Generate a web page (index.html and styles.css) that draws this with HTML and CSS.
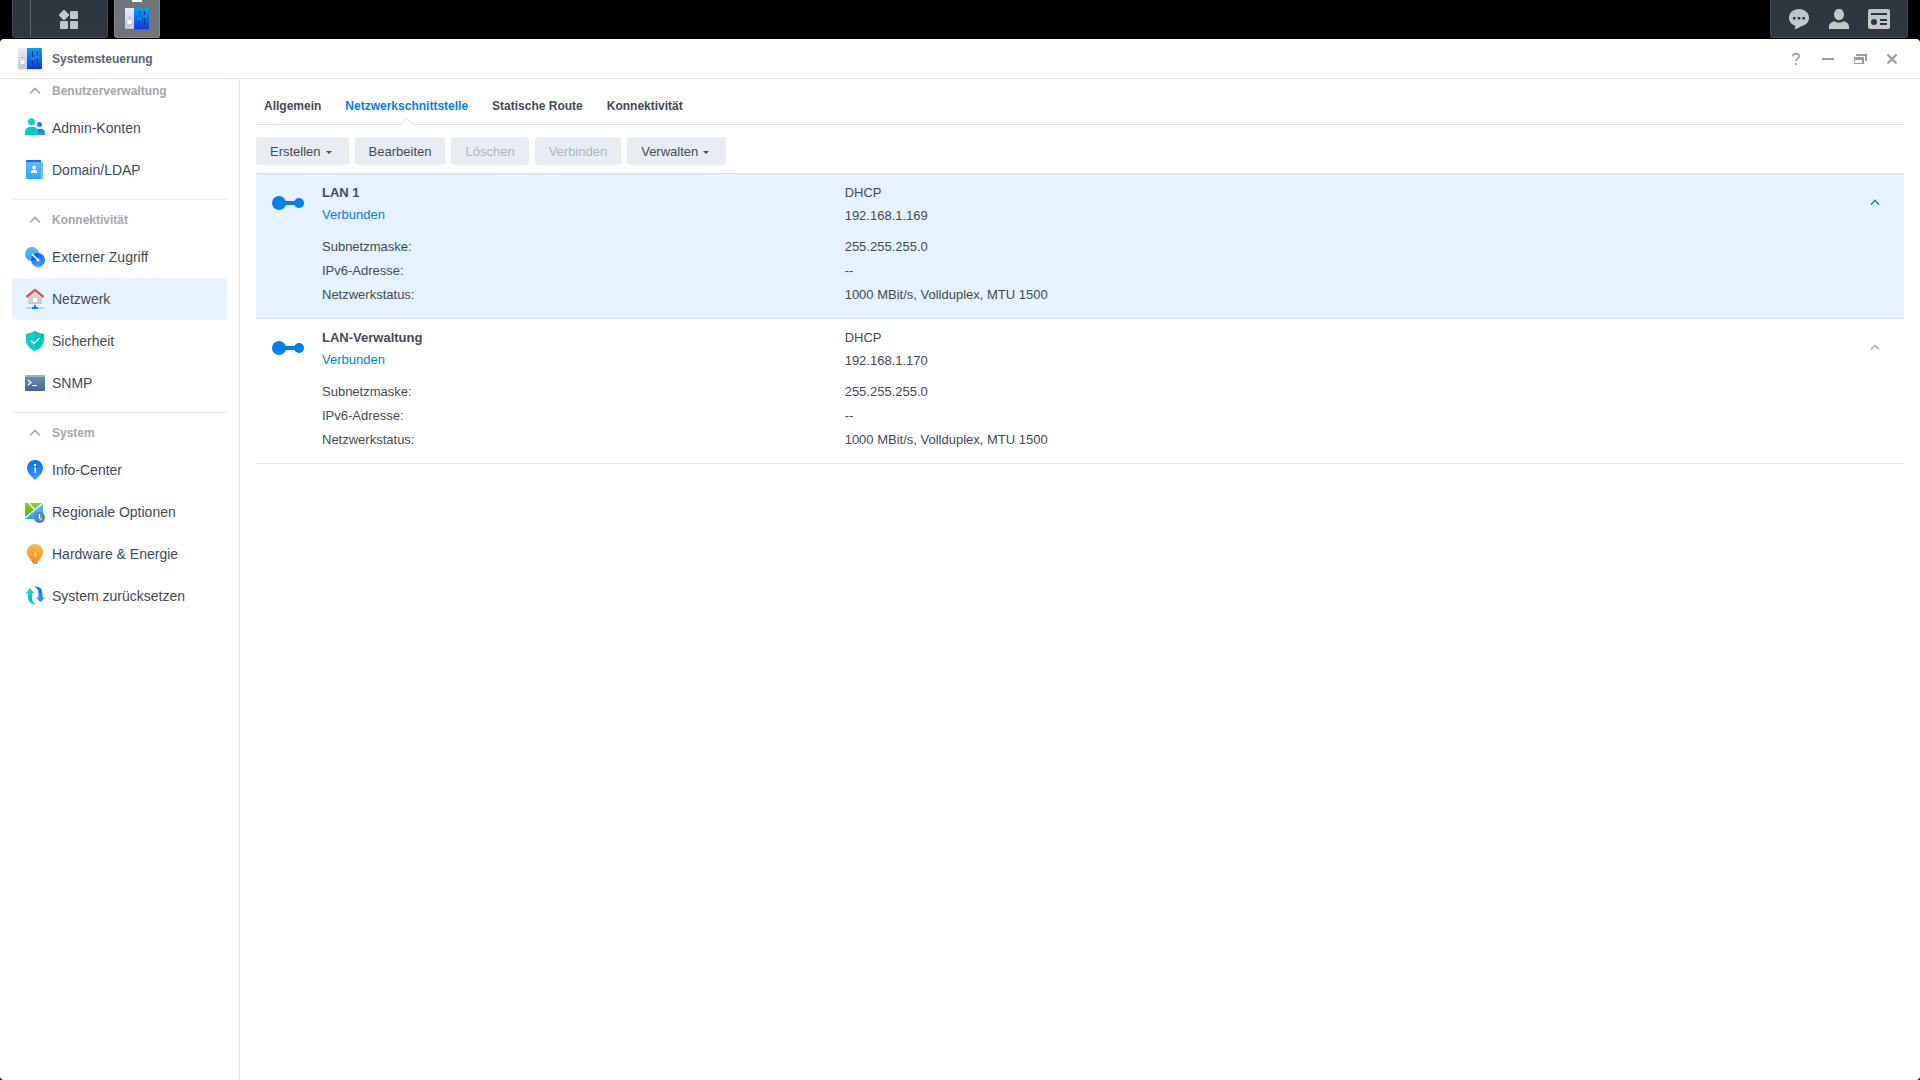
FILE: index.html
```html
<!DOCTYPE html>
<html lang="de">
<head>
<meta charset="utf-8">
<title>Systemsteuerung</title>
<link rel="stylesheet" href="styles.css">
</head>
<body>
<svg class="defs" width="0" height="0" aria-hidden="true">
  <defs>
    <linearGradient id="g-silver" x1="0" y1="0" x2="0" y2="1"><stop offset="0" stop-color="#e9ebfa"/><stop offset="1" stop-color="#c3c8de"/></linearGradient>
    <linearGradient id="g-panel" x1="0" y1="0" x2="0" y2="1"><stop offset="0" stop-color="#08a0ee"/><stop offset="1" stop-color="#1638dc"/></linearGradient>
    <linearGradient id="g-gray" x1="0" y1="0" x2="0" y2="1"><stop offset="0" stop-color="#b9c3cd"/><stop offset="1" stop-color="#c8cbce"/></linearGradient>
    <linearGradient id="g-blue" x1="0" y1="0" x2="0" y2="1"><stop offset="0" stop-color="#0073f7"/><stop offset="1" stop-color="#4a94ff"/></linearGradient>
    <linearGradient id="g-sky" x1="0" y1="0" x2="0" y2="1"><stop offset="0" stop-color="#58b9ff"/><stop offset="1" stop-color="#2fa6fb"/></linearGradient>
    <linearGradient id="g-teal" x1="0" y1="0" x2="0" y2="1"><stop offset="0" stop-color="#2bd4cb"/><stop offset="1" stop-color="#00c2cc"/></linearGradient>
    <linearGradient id="g-steel" x1="0" y1="0" x2="0" y2="1"><stop offset="0" stop-color="#7594b3"/><stop offset="1" stop-color="#426490"/></linearGradient>
    <linearGradient id="g-orange" x1="0" y1="0" x2="0" y2="1"><stop offset="0" stop-color="#fbbd52"/><stop offset="1" stop-color="#f88f1e"/></linearGradient>
    <linearGradient id="g-green" x1="0" y1="0" x2="0" y2="1"><stop offset="0" stop-color="#8fce1c"/><stop offset="1" stop-color="#4fb80c"/></linearGradient>
    <linearGradient id="g-house" x1="0" y1="0" x2="0" y2="1"><stop offset="0" stop-color="#dcdfe2"/><stop offset="1" stop-color="#c6cacd"/></linearGradient>
    <symbol id="i-control" viewBox="0 0 24 24">
      <path d="M1 21h22v1.500H1z" fill="#000" opacity=".18"/>
      <path d="M1 1h8v21H1q-1 0-1-1V2q0-1 1-1z" fill="url(#g-silver)"/>
      <path d="M9 1h14q1 0 1 1v19q0 1-1 1H9z" fill="url(#g-panel)"/>
      <circle cx="4.500" cy="15.500" r="3" fill="#aab0c8"/><circle cx="4.500" cy="15" r="2.500" fill="#f6f7ff"/>
      <circle cx="4.500" cy="10.500" r=".6" fill="#596080"/>
      <path d="M14.500 4v14M19.500 4v14" stroke="#0b3382" stroke-width="1"/>
      <circle cx="14.500" cy="11.500" r="1.600" fill="#1a8cf7"/><circle cx="19.500" cy="9.500" r="1.600" fill="#1a8cf7"/>
    </symbol>
    <symbol id="i-up" viewBox="0 0 12 8"><path d="M1 6.500l5-5 5 5" fill="none" stroke="currentColor" stroke-width="1.700"/></symbol>
    <symbol id="i-link" viewBox="0 0 32 14"><circle cx="7" cy="7" r="7" fill="currentColor"/><circle cx="27" cy="7" r="5" fill="currentColor"/><path d="M7 5h20v4H7z" fill="currentColor"/></symbol>
  </defs>
</svg>

<header class="taskbar">
  <div class="dock">
    <span class="dock-edge"></span>
    <button class="task-btn menu-btn" type="button" aria-label="Hauptmenü">
      <svg width="20" height="20" viewBox="0 0 20 20" fill="url(#g-gray)"><path d="M4.200 .2q.8-.8 1.600 0l4 4q.8.8 0 1.600l-4 4q-.8.8-1.600 0l-4-4q-.8-.8 0-1.600z"/><rect x="11" y="1" width="8" height="8" rx="1"/><rect x="1" y="11" width="8" height="8" rx="1"/><rect x="11" y="11" width="8" height="8" rx="1"/></svg>
    </button>
  </div>
  <button class="task-btn app-btn" type="button" aria-label="Systemsteuerung">
    <svg width="24" height="24"><use href="#i-control"/></svg>
  </button>
  <div class="tray">
    <button class="task-btn" type="button" aria-label="Benachrichtigungen">
      <svg width="20" height="20" viewBox="0 0 20 20"><path d="M10 0c5.700 0 10 3.800 10 8.800 0 4.700-3.800 8-8.500 8.600C10 18.800 8 19.800 5 20c1-1 1.400-2 1.300-3.200C2.500 15.500 0 12.600 0 8.800 0 3.800 4.300 0 10 0z" fill="url(#g-gray)"/><path d="M4 8h2.500v2.500H4zM8.800 8h2.500v2.500H8.800zM13.500 8H16v2.500h-2.500z" fill="#2d343e"/></svg>
    </button>
    <button class="task-btn" type="button" aria-label="Benutzer">
      <svg width="20" height="20" viewBox="0 0 20 20" fill="url(#g-gray)"><ellipse cx="10" cy="5.500" rx="5" ry="5.700"/><path d="M0 20v-2.500C0 14.500 2.500 13 5.500 12.200 8 14 12 14 14.500 12.200 17.500 13 20 14.500 20 17.500V20z"/></svg>
    </button>
    <button class="task-btn" type="button" aria-label="Widgets">
      <svg width="22" height="20" viewBox="0 0 22 20"><rect width="22" height="20" rx="2" fill="url(#g-gray)"/><path d="M3 4h16v2H3zM12 10h7v2h-7zM12 14h7v2h-7z" fill="#2d343e"/><circle cx="6" cy="13" r="3" fill="#2d343e"/></svg>
    </button>
  </div>
</header>

<div class="window">
  <div class="titlebar">
    <svg width="24" height="24" aria-hidden="true"><use href="#i-control"/></svg>
    <h1>Systemsteuerung</h1>
    <div class="window-tools">
      <button type="button" aria-label="Hilfe"><svg width="12" height="12" viewBox="0 0 12 12" fill="none" stroke="currentColor" stroke-width="1.700"><path d="M2.800 3.500C2.800-.3 9.200-.3 9.200 3.300 9.200 5.700 6 5.500 6 8.500M6 10v2"/></svg></button>
      <button type="button" aria-label="Minimieren"><svg width="12" height="12" viewBox="0 0 12 12"><path d="M0 5h12v2H0z" fill="currentColor"/></svg></button>
      <button type="button" aria-label="Wiederherstellen"><svg width="14" height="12" viewBox="0 0 14 12"><path d="M3 1h11v7h-2V3H3zM1 4h10v7H1zM2 7v3h7V7z" fill="currentColor" fill-rule="evenodd"/></svg></button>
      <button type="button" aria-label="Schließen"><svg width="12" height="12" viewBox="0 0 12 12"><path d="M1.500 1.500l9 9M10.500 1.500l-9 9" stroke="currentColor" stroke-width="2.200"/></svg></button>
    </div>
  </div>

  <div class="body">
    <nav class="sidebar" aria-label="Einstellungen">
      <section class="group">
        <h2><svg width="12" height="8"><use href="#i-up"/></svg>Benutzerverwaltung</h2>
        <a class="item" href="#admin"><svg width="24" height="24" viewBox="0 0 24 24"><circle cx="16.500" cy="8.500" r="2.500" fill="#2680ff"/><path d="M13 19v-3c0-2 1-3 3-3h2c3 0 4 2 4 5v1z" fill="url(#g-blue)"/><circle cx="8.500" cy="5.500" r="3.500" fill="url(#g-teal)"/><path d="M2 19v-2c0-4 2-6 5-6h3c4 0 5 2 5 6v2z" fill="#08ccc3"/></svg>Admin-Konten</a>
        <a class="item" href="#ldap"><svg width="24" height="24" viewBox="0 0 24 24"><rect x="5" y="4" width="15" height="17" rx="1" fill="#78c5ff"/><path d="M4 2h14v4H3V3q0-1 1-1z" fill="#0075f5"/><rect x="3" y="4" width="15" height="17" rx="1" fill="url(#g-sky)"/><circle cx="11" cy="9.500" r="2" fill="#fff"/><path d="M8 15v-1q0-2 2-2h2q2 0 2 2v1z" fill="#fff"/></svg>Domain/LDAP</a>
      </section>
      <section class="group">
        <h2><svg width="12" height="8"><use href="#i-up"/></svg>Konnektivität</h2>
        <a class="item" href="#extern"><svg width="24" height="24" viewBox="0 0 24 24"><circle cx="9" cy="9" r="7" fill="url(#g-sky)"/><circle cx="15" cy="15" r="7" fill="url(#g-blue)"/><path d="M8.100 15.940A7 7 0 0 1 15.940 8.100 7 7 0 0 1 8.100 15.940z" fill="#0063ee"/><path d="M9 9l6 6" stroke="#fff" stroke-width="1.500"/><circle cx="15" cy="15" r="1.600" fill="#fff"/></svg>Externer Zugriff</a>
        <a class="item current" href="#netzwerk" aria-current="page"><svg width="24" height="24" viewBox="0 0 24 24"><path d="M12 3l7 6v8H5V9z" fill="url(#g-house)"/><path d="M3.500 9.800L12 2.800l8.500 7" fill="none" stroke="#dc4c46" stroke-width="2.200"/><path d="M10 11h4v4h-4z" fill="#fff"/><path d="M3 20h18v2H3z" fill="#c9cfd6"/><path d="M11 18h2v2h2v2H9v-2h2z" fill="#087cff"/></svg>Netzwerk</a>
        <a class="item" href="#sicherheit"><svg width="24" height="24" viewBox="0 0 24 24"><path d="M12 2q4 2.500 9 3v6q0 7-9 11-9-4-9-11V5q5-.5 9-3z" fill="#00c4c4"/><path d="M12 2v20q-9-4-9-11V5q5-.5 9-3z" fill="#0bcfc8"/><path d="M8 11.500l3 3 5.500-5.500" fill="none" stroke="#fff" stroke-width="1.500"/></svg>Sicherheit</a>
        <a class="item" href="#snmp"><svg width="24" height="24" viewBox="0 0 24 24"><rect x="2" y="4" width="20" height="16" rx="1" fill="url(#g-steel)"/><path d="M2 4h20v2H2z" fill="#9bb4cc"/><path d="M5 9l3 2.500L5 14M9 14.500h5" fill="none" stroke="#fff" stroke-width="1.200"/></svg>SNMP</a>
      </section>
      <section class="group">
        <h2><svg width="12" height="8"><use href="#i-up"/></svg>System</h2>
        <a class="item" href="#info"><svg width="24" height="24" viewBox="0 0 24 24"><path d="M12 2a8 8 0 0 1 8 8q0 5-5 9l-3 3-3-3q-5-4-5-9a8 8 0 0 1 8-8z" fill="url(#g-blue)"/><path d="M11 6h2v2h-2zM11 9.500h2V15h-1.500v-4.500H11z" fill="#fff"/></svg>Info-Center</a>
        <a class="item" href="#region"><svg width="24" height="24" viewBox="0 0 24 24"><path d="M2 3h18v16H2z" fill="url(#g-sky)"/><path d="M2 3h17L2 17z" fill="url(#g-green)"/><path d="M20 3L2 18M6 3l5 6" fill="none" stroke="#fff" stroke-width="1.400"/><circle cx="16.500" cy="17.500" r="5.500" fill="#5b83b0"/><path d="M16.500 14v4l2 1.500" fill="none" stroke="#fff" stroke-width="1.300"/></svg>Regionale Optionen</a>
        <a class="item" href="#hardware"><svg width="24" height="24" viewBox="0 0 24 24"><path d="M9 18h6v2l-1 2h-4l-1-2z" fill="#9aa3ab"/><path d="M12 2a8 8 0 0 1 8 8q0 3-2 5.500-2 1.500-2 3.500H8q0-2-2-3.500-2-2.500-2-5.500a8 8 0 0 1 8-8z" fill="url(#g-orange)"/><path d="M11 11.500h1.500V15" fill="none" stroke="#fff" stroke-width="1.300"/></svg>Hardware &amp; Energie</a>
        <a class="item" href="#reset"><svg width="24" height="24" viewBox="0 0 24 24"><path d="M7 4l4.500 5.500H9V14q0 4.500 4 6-8 .500-8-7V9.500H2.500z" fill="url(#g-teal)"/><path d="M17.500 18.500L13 13.500h2.500V9q0-4.500-4.500-6.500 8.500-.5 8.500 7v4h2.500z" fill="url(#g-blue)"/></svg>System zurücksetzen</a>
      </section>
    </nav>

    <main class="content">
      <nav class="tabs" aria-label="Netzwerk">
        <a href="#allgemein">Allgemein</a>
        <a class="active" href="#schnittstelle" aria-current="page">Netzwerkschnittstelle<svg class="pointer" width="14" height="7" viewBox="0 0 14 7" aria-hidden="true"><path d="M1 7V6.500L7 .5l6 6V7z" fill="#fff"/><path d="M0 6.500h1L7 .7l6 5.800h1" fill="none" stroke="#d4e0ea"/></svg></a>
        <a href="#route">Statische Route</a>
        <a href="#konnektivitaet">Konnektivität</a>
      </nav>

      <div class="toolbar">
        <button class="btn menu" type="button" aria-haspopup="menu">Erstellen</button>
        <button class="btn" type="button">Bearbeiten</button>
        <button class="btn" type="button" disabled>Löschen</button>
        <button class="btn" type="button" disabled>Verbinden</button>
        <button class="btn menu" type="button" aria-haspopup="menu">Verwalten</button>
      </div>

      <ul class="interfaces">
        <li class="interface selected">
          <svg class="link-icon" width="32" height="14" aria-hidden="true"><use href="#i-link"/></svg>
          <div class="names">
            <h3>LAN 1</h3>
            <p class="status">Verbunden</p>
            <p>Subnetzmaske:</p>
            <p>IPv6-Adresse:</p>
            <p>Netzwerkstatus:</p>
          </div>
          <div class="values">
            <p class="mode">DHCP</p>
            <p class="address">192.168.1.169</p>
            <p>255.255.255.0</p>
            <p>--</p>
            <p>1000 MBit/s, Vollduplex, MTU 1500</p>
          </div>
          <button class="fold" type="button" aria-label="LAN 1 einklappen" aria-expanded="true"><svg width="10" height="7"><use href="#i-up"/></svg></button>
        </li>
        <li class="interface">
          <svg class="link-icon" width="32" height="14" aria-hidden="true"><use href="#i-link"/></svg>
          <div class="names">
            <h3>LAN-Verwaltung</h3>
            <p class="status">Verbunden</p>
            <p>Subnetzmaske:</p>
            <p>IPv6-Adresse:</p>
            <p>Netzwerkstatus:</p>
          </div>
          <div class="values">
            <p class="mode">DHCP</p>
            <p class="address">192.168.1.170</p>
            <p>255.255.255.0</p>
            <p>--</p>
            <p>1000 MBit/s, Vollduplex, MTU 1500</p>
          </div>
          <button class="fold" type="button" aria-label="LAN-Verwaltung einklappen" aria-expanded="true"><svg width="10" height="7"><use href="#i-up"/></svg></button>
        </li>
      </ul>
    </main>
  </div>
</div>
</body>
</html>
```
FILE: styles.css
```css
* { box-sizing: border-box; }

body {
  margin: 0;
  min-height: 100vh;
  display: flex;
  flex-direction: column;
  background: #000;
  color: #414b55;
  font: 13px/20px "Liberation Sans", Arial, sans-serif;
}

h1, h2, h3, p, ul { margin: 0; padding: 0; font-size: inherit; }
button { font: inherit; color: inherit; border: 0; padding: 0; background: none; cursor: pointer; }
a { color: inherit; text-decoration: none; }
svg { display: block; flex: none; }
.defs { position: absolute; }

/* Taskbar */
.taskbar { display: flex; height: 39px; padding: 0 12px; }
.dock, .tray {
  display: flex;
  height: 38px;
  background: linear-gradient(#2d353f, #30373f);
  border: solid #434b55;
  border-width: 0 1px 1px;
  border-radius: 0 0 3px 3px;
}
.dock { width: 96px; margin-right: 6px; }
.dock-edge { width: 18px; height: 37px; border-right: 1px solid #5d646d; }
.task-btn { display: flex; align-items: center; justify-content: center; width: 40px; height: 38px; }
.menu-btn { flex: 1; height: 39px; }
.app-btn {
  position: relative;
  width: 46px;
  background: #6f757b;
  border: solid #858a8f;
  border-width: 0 1px 1px;
  border-radius: 0 0 3px 3px;
}
.app-btn::before { content: ""; position: absolute; top: 0; left: 17px; width: 10px; height: 2px; background: #fff; }
.tray { margin-left: auto; padding: 0 8px; }

/* Window */
.window { flex: 1; display: flex; flex-direction: column; background: #fff; border-radius: 4px; }
.titlebar {
  display: flex;
  align-items: center;
  gap: 10px;
  height: 40px;
  padding: 0 12px 0 18px;
  border-bottom: 1px solid #dde6ed;
  color: #5c656e;
  font-size: 12px;
}
.window-tools { display: flex; margin-left: auto; color: #969fa8; }
.window-tools button { display: flex; align-items: center; justify-content: center; width: 32px; height: 32px; }
.body { flex: 1; display: flex; }

/* Sidebar */
.sidebar { flex: none; width: 240px; padding: 0 12px; border-right: 1px solid #dde6ed; }
.group + .group { margin-top: 8px; padding-top: 8px; border-top: 1px solid #e6ecf1; }
.group h2 {
  display: flex;
  align-items: center;
  gap: 11px;
  height: 24px;
  margin-bottom: 4px;
  padding-left: 17px;
  color: #a4a8ad;
  font-size: 12px;
}
.item {
  display: flex;
  align-items: center;
  gap: 5px;
  height: 42px;
  padding-left: 11px;
  border-radius: 4px;
  font-size: 14px;
}
.item.current { background: #e6f2fe; }

/* Content */
.content { flex: 1; min-width: 0; padding: 8px 16px 16px; }
.tabs {
  display: flex;
  gap: 24px;
  height: 38px;
  padding: 0 8px;
  border-bottom: 1px solid #d4e0ea;
  font-size: 12px;
  font-weight: bold;
  line-height: 39px;
}
.tabs a { position: relative; height: 37px; }
.tabs .active { color: #057feb; }
.pointer { position: absolute; left: 50%; bottom: -1px; margin-left: -7px; }

.toolbar { display: flex; gap: 6px; padding: 12px 0 8px; }
.btn { height: 28px; padding: 2px 14px 0; border-radius: 3px; background: #e8edf4; }
.btn:disabled { color: #aeb5bd; cursor: default; }
.menu { display: flex; align-items: center; gap: 5px; padding-right: 17px; }
.menu::after { content: ""; border: solid transparent; border-width: 3px 3px 0; border-top-color: currentColor; }

/* Interface list */
.interfaces { list-style: none; border-top: 1px solid #d4e0ea; }
.interface {
  display: grid;
  grid-template-columns: 50px 1fr 2fr;
  padding: 9px 14px 11px 16px;
  border-bottom: 1px solid #e4e9f0;
  position: relative;
}
.interface.selected { background: #e6f2fe; border-color: #d4e0ea; }
.link-icon { margin-top: 13px; color: #057feb; }
.interface p { line-height: 24px; }
.interface .status { margin-bottom: 8px; color: #057feb; }
.interface .mode { line-height: 20px; }
.interface .address { margin-top: 1px; margin-bottom: 7px; }
.fold { position: absolute; top: 13px; right: 14px; display: flex; align-items: center; justify-content: center; width: 30px; height: 30px; color: #a4a8ad; }
.selected .fold { color: #057feb; }
```
